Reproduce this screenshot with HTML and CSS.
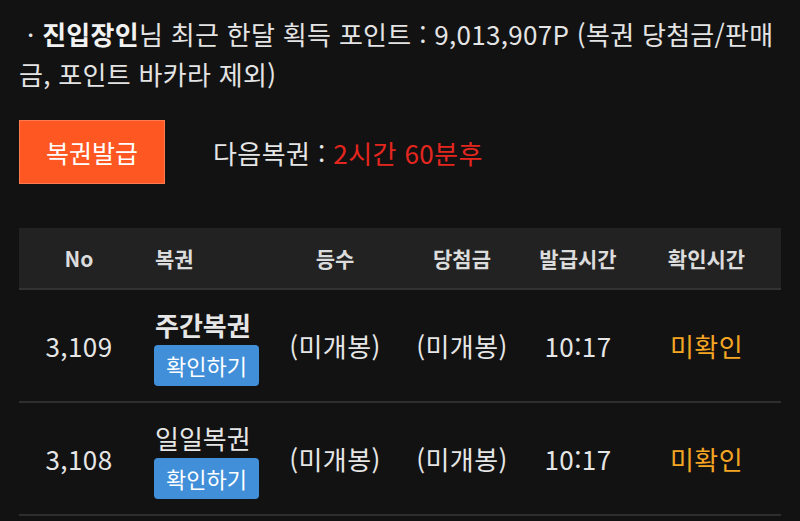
FILE: index.html
```html
<!DOCTYPE html>
<html lang="ko">
<head>
<meta charset="utf-8">
<link rel="stylesheet" href="styles.css">
</head>
<body>
<div class="page">
  <p class="info">· <b class="name">진입장인</b>님 최근 한달 획득 포인트 : 9,013,907P (복권 당첨금/판매금, 포인트 바카라 제외)</p>
  <div class="issue">
    <button class="issue-btn">복권발급</button>
    <div class="next">다음복권 : <span class="remain">2시간 60분후</span></div>
  </div>
  <div class="table">
    <div class="row head">
      <div class="c c1">No</div>
      <div class="c c2">복권</div>
      <div class="c c3">등수</div>
      <div class="c c4">당첨금</div>
      <div class="c c5">발급시간</div>
      <div class="c c6">확인시간</div>
    </div>
    <div class="row">
      <div class="c c1">3,109</div>
      <div class="c c2 cell-ticket"><div class="ticket bold">주간복권</div><button class="check">확인하기</button></div>
      <div class="c c3">(미개봉)</div>
      <div class="c c4">(미개봉)</div>
      <div class="c c5">10:17</div>
      <div class="c c6 unread">미확인</div>
    </div>
    <div class="row">
      <div class="c c1">3,108</div>
      <div class="c c2 cell-ticket"><div class="ticket">일일복권</div><button class="check">확인하기</button></div>
      <div class="c c3">(미개봉)</div>
      <div class="c c4">(미개봉)</div>
      <div class="c c5">10:17</div>
      <div class="c c6 unread">미확인</div>
    </div>
  </div>
</div>
</body>
</html>
```
FILE: styles.css
```css
html, body {
  margin: 0;
  padding: 0;
  background: #121212;
}
body {
  font-family: "Noto Sans CJK KR", "Noto Sans", sans-serif;
  color: #e6e6e6;
}
.page {
  padding: 14px 19px 0 19px;
}
.info {
  margin: 0;
  font-size: 26px;
  letter-spacing: 0.3px;
  line-height: 40px;
  color: #e4e4e4;
  width: 760px;
  text-indent: 8px;
}
.name {
  font-weight: 700;
  color: #f2f2f2;
}
.issue {
  display: flex;
  align-items: center;
  gap: 48px;
  margin-top: 26px;
}
.issue-btn {
  width: 146px;
  height: 64px;
  border: 1px solid #ff7a50;
  background: #ff5722;
  color: #fff;
  font-family: inherit;
  font-size: 25px;
  padding: 0;
}
.next {
  font-size: 26px;
  letter-spacing: 0.4px;
  color: #e6e6e6;
}
.remain {
  color: #e5261f;
}
.table {
  margin-top: 44px;
  width: 762px;
}
.row {
  display: grid;
  grid-template-columns: 120px 131px 130px 124px 108px 149px;
  align-items: center;
  height: 111px;
  border-bottom: 2px solid #2e2e2e;
  font-size: 26px;
  letter-spacing: 0.4px;
}
.row.head {
  height: 60px;
  background: #222222;
  border-bottom: 2px solid #333;
  font-size: 21px;
  letter-spacing: 0;
  font-weight: 700;
  color: #dcdcdc;
}
.c {
  text-align: center;
}
.c2 {
  text-align: left;
  padding-left: 16px;
}
.cell-ticket {
  padding-top: 4px;
}
.ticket {
  font-size: 26px;
  line-height: 30px;
  letter-spacing: 0;
}
.ticket.bold {
  font-weight: 700;
}
.check {
  margin-top: 5px;
  width: 105px;
  height: 41px;
  border: none;
  border-radius: 4px;
  background: #418fd8;
  color: #fff;
  font-family: inherit;
  font-size: 22px;
  padding: 0;
  margin-left: -1px;
}
.unread {
  color: #f5a623;
}
```
